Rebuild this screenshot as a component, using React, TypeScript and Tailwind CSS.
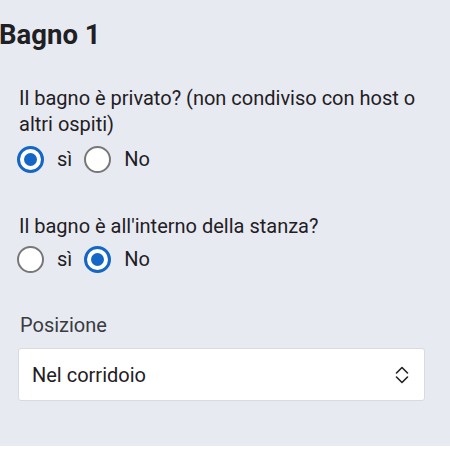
import { useState } from "react";

type Choice = "si" | "no";

const Radio = ({ checked, onClick }: { checked: boolean; onClick: () => void }) => (
  <button
    type="button"
    onClick={onClick}
    className={`flex h-[27px] w-[27px] shrink-0 items-center justify-center rounded-full bg-white ${
      checked ? "border-[3px] border-[#1467c4]" : "border-[2.5px] border-[#777777]"
    }`}
  >
    {checked && <span className="block h-[13px] w-[13px] rounded-full bg-[#1467c4]" />}
  </button>
);

const YesNo = ({ value, onChange }: { value: Choice; onChange: (v: Choice) => void }) => (
  <div className="-ml-[1px] flex h-[28px] items-center">
    <Radio checked={value === "si"} onClick={() => onChange("si")} />
    <span className="ml-[13px] mr-[12px]">sì</span>
    <Radio checked={value === "no"} onClick={() => onChange("no")} />
    <span className="ml-[13px]">No</span>
  </div>
);

const UpDown = () => (
  <svg width="14" height="18" viewBox="0 0 14 18" fill="none" stroke="#222" strokeWidth="1.6" strokeLinecap="round" strokeLinejoin="round">
    <path d="M1.5 7 L7 1.5 L12.5 7" />
    <path d="M1.5 11 L7 16.5 L12.5 11" />
  </svg>
);

export default function App() {
  const [privato, setPrivato] = useState<Choice>("si");
  const [interno, setInterno] = useState<Choice>("no");

  return (
    <div className="flex h-[450px] w-[450px] flex-col bg-white text-[#1f2023] [font-family:Roboto,'Noto_Sans',sans-serif]">
      <div className="h-[446px] bg-[#e8eaf2]">
        <h2 className="-ml-[1px] pt-[19px] text-[27.5px] font-bold leading-[32px]">Bagno 1</h2>

        <div className="px-[18px] text-[20px] leading-[26px]">
          <p className="mt-[34px] pl-[1px]">Il bagno è privato? (non condiviso con host o altri ospiti)</p>
          <div className="mt-[8px]">
            <YesNo value={privato} onChange={setPrivato} />
          </div>

          <p className="mt-[40px] pl-[1px]">Il bagno è all'interno della stanza?</p>
          <div className="mt-[6px]">
            <YesNo value={interno} onChange={setInterno} />
          </div>

          <label className="mt-[39px] block pl-[2px] text-[#3a3b3f]">Posizione</label>
          <div className="mt-[10px] flex h-[53px] w-[407px] items-center justify-between rounded-[3px] border border-[#d9dade] bg-white pl-[13px] pr-[15px]">
            <span>Nel corridoio</span>
            <UpDown />
          </div>
        </div>
      </div>
    </div>
  );
}
